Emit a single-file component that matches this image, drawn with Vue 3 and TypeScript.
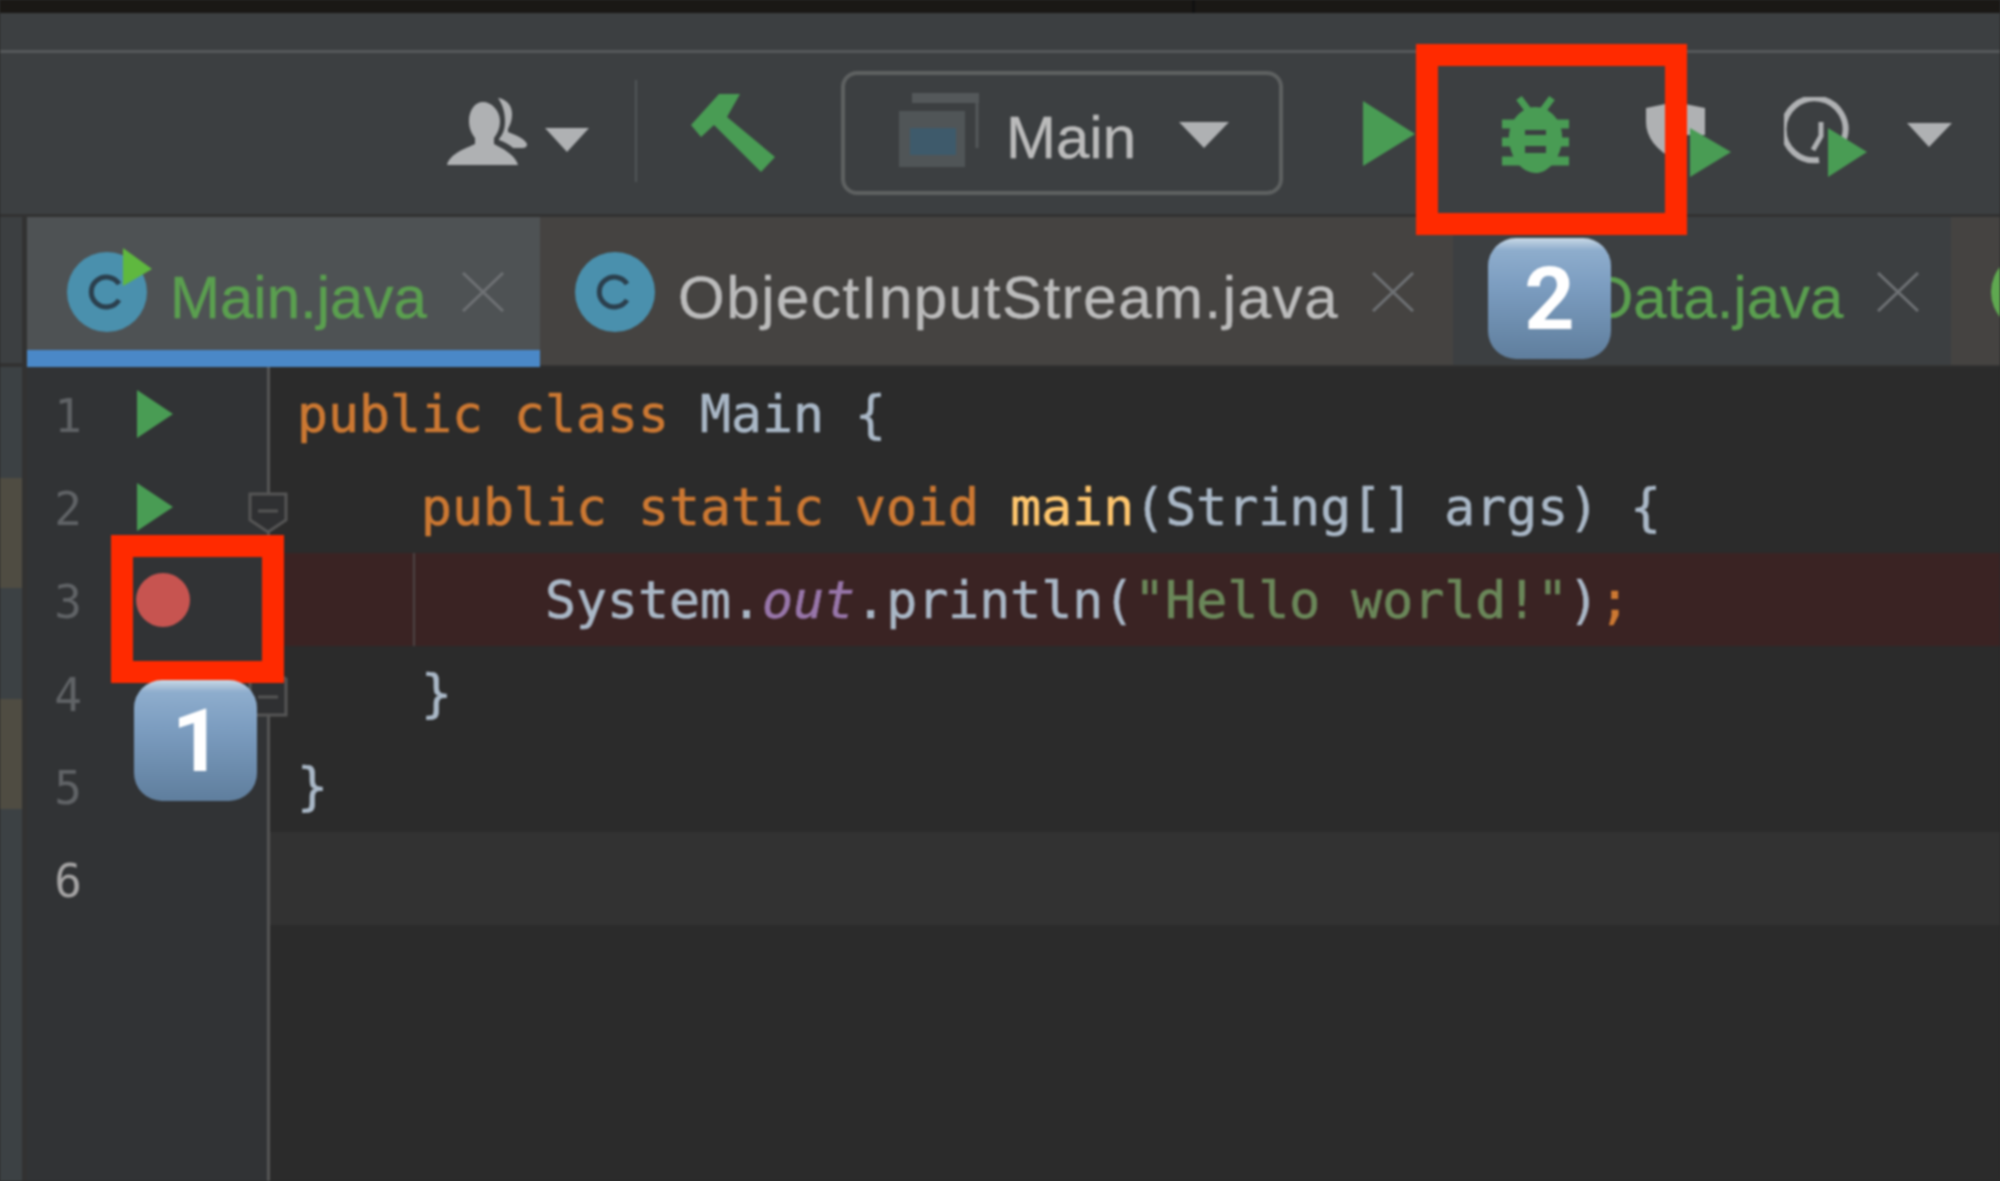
<script setup lang="ts">
interface Tok { t: string; c: string }
interface Line { n: number; run: boolean; cls: string; toks: Tok[] }
const lines: Line[] = [
  { n: 1, run: true, cls: '', toks: [{ t: 'public class ', c: 'kw' }, { t: 'Main {', c: 'df' }] },
  { n: 2, run: true, cls: '', toks: [{ t: '    public static void ', c: 'kw' }, { t: 'main', c: 'fn' }, { t: '(String[] args) {', c: 'df' }] },
  { n: 3, run: false, cls: 'bp', toks: [{ t: '        System.', c: 'df' }, { t: 'out', c: 'fd' }, { t: '.println(', c: 'df' }, { t: '"Hello world!"', c: 'st' }, { t: ')', c: 'df' }, { t: ';', c: 'kw' }] },
  { n: 4, run: false, cls: '', toks: [{ t: '    }', c: 'df' }] },
  { n: 5, run: false, cls: '', toks: [{ t: '}', c: 'df' }] },
  { n: 6, run: false, cls: 'caret', toks: [{ t: ' ', c: 'df' }] },
]
const stripes = ['s-b', 's-o', 's-b', 's-o']
</script>

<template>
  <div class="ide">
    <div class="topbar"><span class="top-a"></span><span class="top-b"></span></div>
    <div class="navbar"></div>
    <div class="toolbar">
      <svg class="i-user" width="80" height="68" viewBox="0 0 80 68">
        <path fill="#afb1b3" d="M36 4c-8 0-14 8-14 19 0 8 3 13 6 17v6C20 50 3 55 0 67h71c-2-9-14-16-24-21v-6c3-4 6-9 6-17 0-11-9-19-17-19z" />
        <path fill="#afb1b3" d="M51 0c8 1 14 7 14 16 0 7-2 11-4 15v3c8 3 17 7 19 12 0 3-2 4-5 4H66c-3-3-8-6-14-8v-1c4-5 6-10 6-18 0-10-3-17-7-23z" />
      </svg>
      <svg class="i-caret1" width="44" height="24" viewBox="0 0 44 24"><path fill="#afb1b3" d="M0 0h44L22 24z" /></svg>
      <span class="sep"></span>
      <svg class="i-hammer" width="84" height="80" viewBox="0 0 84 80"><path fill="#499c54" d="M28 1h21L36 24l48 40-14 15-47-47-13 12L0 32z" /></svg>
      <div class="config">
        <svg class="i-win" width="80" height="74" viewBox="0 0 80 74">
          <path fill="none" stroke="#54585a" stroke-width="3" d="M78 1v54" />
          <rect x="13" y="0" width="67" height="10" fill="#54585a" />
          <rect x="0" y="18" width="66" height="56" fill="#505557" />
          <rect x="11" y="35" width="46" height="27" fill="#3e5a6b" />
        </svg>
        <span class="config-name">Main</span>
        <svg class="i-caret2" width="50" height="26" viewBox="0 0 50 26"><path fill="#afb1b3" d="M0 0h50L25 26z" /></svg>
      </div>
      <svg class="i-run" width="52" height="65" viewBox="0 0 52 65"><path fill="#499c54" d="M0 0l52 33L0 65z" /></svg>
      <svg class="i-bug" width="69" height="78" viewBox="0 0 69 78">
        <path fill="none" stroke="#499c54" stroke-width="7" d="M18 3l12 16M51 3L39 19" />
        <path fill="#499c54" d="M34.500 12C48 12 60 24 61 40c1 20-12 38-26.500 38S7 60 8 40C9 24 21 12 34.500 12z" />
        <path fill="none" stroke="#499c54" stroke-width="9" d="M1 29h67M1 47h67M1 66h67" />
        <path fill="#3c3f41" d="M24 35h21v5H24zM24 51h21v7H24z" />
      </svg>
      <svg class="i-cov" width="85" height="75" viewBox="0 0 85 75">
        <path fill="#afb1b3" d="M0 6l29-6 30 6v27H41V12L29 9v49C10 48 0 35 0 20z" />
        <path fill="#499c54" d="M44 26l41 24-41 25z" />
      </svg>
      <svg class="i-prof" width="83" height="80" viewBox="0 0 83 80">
        <path fill="none" stroke="#afb1b3" stroke-width="6" d="M60 42A31 31 0 1 0 35 63" />
        <path fill="none" stroke="#afb1b3" stroke-width="5" d="M37 25v14l-8 14" />
        <path fill="#499c54" d="M44 31l39 24-39 25z" />
      </svg>
      <svg class="i-caret3" width="45" height="24" viewBox="0 0 45 24"><path fill="#afb1b3" d="M0 0h45L22 24z" /></svg>
    </div>

    <div class="body">
      <div class="strip">
        <div class="s-head"></div>
        <div v-for="(s, i) in stripes" :key="i" :class="s"></div>
        <div class="s-rest"></div>
      </div>
      <div class="main">
        <div class="tabs">
          <div class="tab tab-a">
            <svg class="tab-icon" width="85" height="85" viewBox="0 0 85 85">
              <circle cx="40" cy="44" r="40" fill="#4a90ad" />
              <path fill="none" stroke="#2b3f4d" stroke-width="5" d="M52 36a15 15 0 1 0 0 16" />
              <path fill="#5fb83f" d="M56 0l29 21-29 17z" />
            </svg>
            <span class="tname green">Main.java</span>
            <svg class="x" width="42" height="40" viewBox="0 0 42 40"><path stroke="#6e7174" stroke-width="3" d="M1 1l40 38M41 1L1 39" /></svg>
          </div>
          <div class="tab tab-b">
            <svg class="tab-icon" width="80" height="85" viewBox="0 0 80 85">
              <circle cx="40" cy="44" r="40" fill="#4a90ad" />
              <path fill="none" stroke="#2b3f4d" stroke-width="5" d="M52 36a15 15 0 1 0 0 16" />
            </svg>
            <span class="tname grey wide">ObjectInputStream.java</span>
            <svg class="x" width="42" height="40" viewBox="0 0 42 40"><path stroke="#6e7174" stroke-width="3" d="M1 1l40 38M41 1L1 39" /></svg>
          </div>
          <div class="tab tab-c">
            <span class="tname green">Data.java</span>
            <svg class="x" width="42" height="40" viewBox="0 0 42 40"><path stroke="#6e7174" stroke-width="3" d="M1 1l40 38M41 1L1 39" /></svg>
          </div>
          <div class="tab tab-d">
            <svg class="tab-icon" width="80" height="85" viewBox="0 0 80 85"><circle cx="40" cy="44" r="40" fill="#5fa850" /></svg>
          </div>
        </div>
        <div class="editor">
          <div v-for="l in lines" :key="l.n" class="row" :class="l.cls">
            <div class="gutter">
              <span class="num">{{ l.n }}</span>
              <svg v-if="l.run" class="grun" width="36" height="48" viewBox="0 0 36 48"><path fill="#499c54" d="M0 0l36 24L0 48z" /></svg>
            </div>
            <div class="gline"></div>
            <div class="code"><span v-for="(k, j) in l.toks" :key="j" :class="k.c">{{ k.t }}</span></div>
          </div>
          <div class="rest">
            <div class="gutter"></div>
            <div class="gline"></div>
            <div class="code"></div>
          </div>
        </div>
      </div>
    </div>

    <span class="guide"></span>
    <svg class="fold f1" width="40" height="42" viewBox="0 0 40 42"><path fill="#2f3032" stroke="#555" stroke-width="3" d="M2 2h36v26L20 40 2 28z" /><path stroke="#555" stroke-width="3" d="M10 19h20" /></svg>
    <svg class="fold f2" width="40" height="52" viewBox="0 0 40 52"><path fill="#2f3032" stroke="#555" stroke-width="3" d="M2 50h36V14L20 2 2 14z" /><path stroke="#555" stroke-width="3" d="M10 32h20" /></svg>
    <span class="bpdot"></span>
    <div class="mark m1"></div>
    <div class="mark m2"></div>
    <div class="badge b1">1</div>
    <div class="badge b2">2</div>
  </div>
</template>

<style>
html, body { margin: 0; background: #2b2b2b; overflow: hidden; }
</style>

<style scoped>
.ide { position: relative; width: 2000px; height: 1181px; overflow: hidden; display: flex; flex-direction: column; background: #2b2b2b; font-family: "Liberation Sans", Arial, sans-serif; filter: blur(0.8px); }
.topbar { height: 13px; display: flex; gap: 3px; background: #111; }
.top-a { width: 1192px; background: #1a1815; }
.top-b { flex: 1; background: #1a1815; }
.navbar { height: 37px; background: #3c3f41; border-bottom: 3px solid #55585a; }
.toolbar { height: 161px; display: flex; align-items: flex-start; background: #3c3f41; border-bottom: 3px solid #323232; }
.toolbar > * { flex: none; }
.i-user { margin: 45px 0 0 447px; }
.i-caret1 { margin: 75px 0 0 18px; }
.sep { margin: 27px 0 0 46px; width: 2px; height: 102px; background: #515658; }
.i-hammer { margin: 40px 0 0 54px; }
.config { margin: 18px 0 0 66px; box-sizing: border-box; width: 442px; height: 124px; border: 4px solid #5e6161; border-radius: 16px; display: flex; align-items: flex-start; }
.i-win { margin: 18px 0 0 54px; flex: none; }
.config-name { margin: 28px 0 0 27px; font-size: 60px; line-height: 70px; color: #bbbbbb; -webkit-text-stroke: 0.4px currentColor; }
.i-caret2 { margin: 47px 0 0 43px; flex: none; }
.i-run { margin: 48px 0 0 80px; }
.i-bug { margin: 42px 0 0 86px; }
.i-cov { margin: 49px 0 0 76px; }
.i-prof { margin: 44px 0 0 53px; }
.i-caret3 { margin: 70px 0 0 40px; }

.body { flex: 1; display: flex; min-height: 0; }
.strip { width: 22px; flex: none; display: flex; flex-direction: column; border-right: 5px solid #323232; }
.s-head { height: 146px; background: #3c3f41; border-bottom: 4px solid #323232; }
.s-b { height: 111px; background: #3c4144; }
.s-o { height: 110px; background: #4f4c42; }
.s-rest { flex: 1; background: #3c4144; }
.main { flex: 1; min-width: 0; display: flex; flex-direction: column; }

.tabs { height: 150px; flex: none; display: flex; }
.tab { box-sizing: border-box; height: 150px; flex: none; display: flex; align-items: flex-start; border-bottom: 2px solid #323232; overflow: hidden; }
.tab-a { width: 513px; background: #4e5254; border-bottom: 17px solid #4a88c7; padding-left: 40px; }
.tab-b { width: 913px; background: #454341; padding-left: 35px; }
.tab-c { width: 498px; background: #3c3f41; padding-left: 114px; }
.tab-d { flex: 1; background: #454341; padding-left: 40px; }
.tab-icon { margin-top: 31px; flex: none; overflow: visible; }
.tab-a .tab-icon { margin-right: -5px; }
.tname { margin: 46px 0 0 23px; font-size: 60px; line-height: 70px; white-space: nowrap; -webkit-text-stroke: 0.4px currentColor; }
.wide { letter-spacing: 1.55px; }
.green { color: #5a9f4f; }
.grey { color: #bbbbbb; }
.x { margin-top: 55px; margin-left: auto; flex: none; }
.tab-a .x { margin-right: 36px; }
.tab-b .x { margin-right: 39px; }
.tab-c .x { margin-right: 32px; }

.editor { flex: 1; min-height: 0; display: flex; flex-direction: column; }
.row { height: 93px; flex: none; display: flex; }
.rest { flex: 1; display: flex; }
.gutter { width: 240px; flex: none; background: #313335; display: flex; align-items: center; }
.gline { width: 3px; flex: none; background: #555555; }
.num { width: 55px; margin-top: 5px; text-align: right; font-family: "DejaVu Sans Mono", monospace; font-size: 46px; color: #606366; }
.caret .num { color: #a4a3a3; }
.grun { margin-left: 55px; }
.code { flex: 1; display: flex; align-items: center; padding-left: 27px; white-space: pre; font-family: "DejaVu Sans Mono", monospace; font-size: 51.500px; -webkit-text-stroke: 0.6px currentColor; }
.bp .code { background: #3a2323; }
.caret .code { background: #323232; }
.kw { color: #cc7832; }
.df { color: #a9b7c6; }
.fn { color: #ffc66d; }
.st { color: #6a8759; }
.fd { color: #9876aa; font-style: italic; }

.guide { position: absolute; left: 413px; top: 553px; width: 2px; height: 93px; background: #4d4443; }
.fold { position: absolute; left: 248px; }
.f1 { top: 492px; }
.f2 { top: 665px; }
.bpdot { position: absolute; left: 136px; top: 573px; width: 54px; height: 54px; border-radius: 50%; background: #c75450; }
.mark { position: absolute; box-sizing: border-box; border: 22px solid #ff2a00; }
.m1 { left: 111px; top: 535px; width: 173px; height: 148px; }
.m2 { left: 1416px; top: 44px; width: 271px; height: 191px; }
.badge { position: absolute; width: 123px; height: 121px; border-radius: 28px; background: linear-gradient(180deg, #cad9e6 0%, #8eadcd 10%, #7c9dc0 40%, #5f7e9d 100%); color: #ffffff; font-family: Roboto, "Liberation Sans", sans-serif; font-weight: 700; font-size: 88px; line-height: 121px; text-align: center; }
.b1 { left: 134px; top: 680px; text-indent: 3px; }
.b2 { left: 1488px; top: 238px; }
</style>
